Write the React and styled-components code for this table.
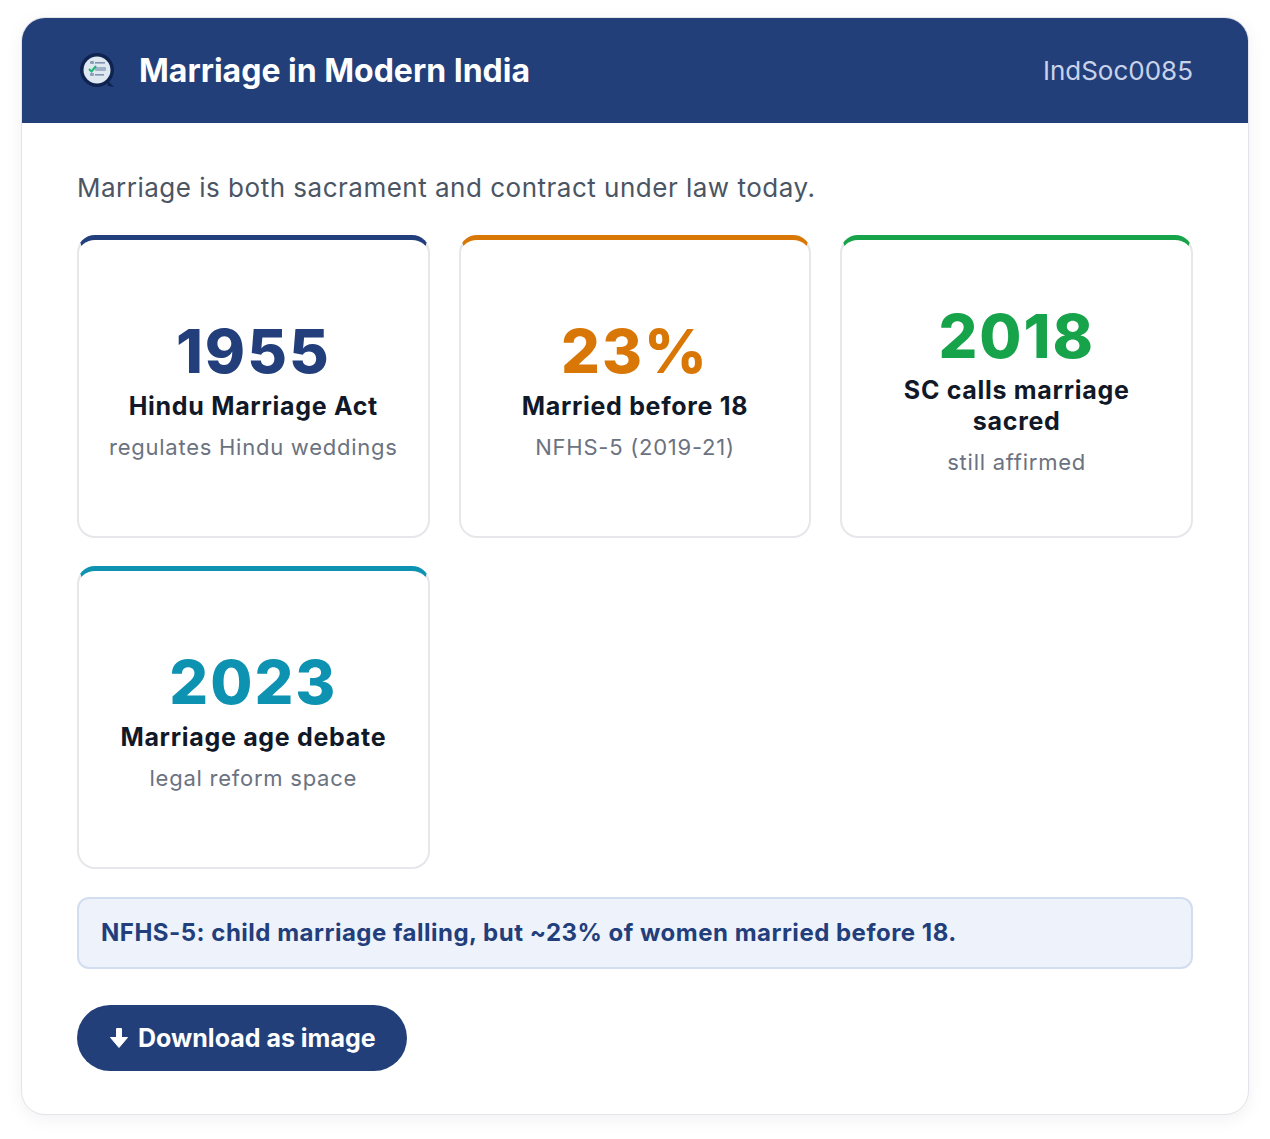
import styled, { createGlobalStyle } from 'styled-components'

const GlobalStyle = createGlobalStyle`
  html, body {
    margin: 0;
    padding: 0;
    background: #ffffff;
  }
  body {
    font-family: Inter, "Noto Sans", "Liberation Sans", sans-serif;
  }
`

const stats = [
  { num: '1955', color: '#233f7b', label: 'Hindu Marriage Act', sub: 'regulates Hindu weddings' },
  { num: '23%', color: '#d97706', label: 'Married before 18', sub: 'NFHS-5 (2019-21)' },
  { num: '2018', color: '#16a34a', label: 'SC calls marriage sacred', sub: 'still affirmed' },
  { num: '2023', color: '#0e92b1', label: 'Marriage age debate', sub: 'legal reform space' },
]

const Logo = () => (
  <svg width='40' height='40' viewBox='0 0 40 40'>
    <circle cx='19' cy='19' r='17' fill='#0f2350' />
    <path d='M29 29 L36 36 L30 35 Z' fill='#0f2350' />
    <circle cx='19' cy='19' r='13.5' fill='#dfe7f1' />
    <rect x='12' y='10' width='4' height='3' rx='1' fill='#8aa0bd' />
    <rect x='17' y='11' width='10' height='1.6' fill='#7f93b0' />
    <rect x='17' y='16' width='11' height='4' rx='1' fill='#9fb1c9' />
    <rect x='12' y='22' width='4' height='3' rx='1' fill='#8aa0bd' />
    <rect x='17' y='23' width='9' height='1.6' fill='#7f93b0' />
    <path d='M11 18 L13.5 20.5 L18 15' stroke='#22b573' strokeWidth='2' fill='none' />
  </svg>
)

const DownArrow = () => (
  <svg width='18' height='20' viewBox='0 0 18 20'>
    <rect x='6' y='0' width='6' height='11' rx='1' fill='#fff' />
    <path d='M0.5 9.5 L17.5 9.5 L9 19.5 Z' fill='#fff' strokeLinejoin='round' stroke='#fff' strokeWidth='1' />
  </svg>
)

const App = () => {
  return (
    <Page>
      <GlobalStyle />
      <Card>
        <Header>
          <Brand>
            <Logo />
            <Title>Marriage in Modern India</Title>
          </Brand>
          <Code>IndSoc0085</Code>
        </Header>

        <Body>
          <Lead>Marriage is both sacrament and contract under law today.</Lead>

          <Grid>
            {stats.map((s) => (
              <Stat key={s.num} accent={s.color}>
                <Num color={s.color}>{s.num}</Num>
                <Label>{s.label}</Label>
                <Sub>{s.sub}</Sub>
              </Stat>
            ))}
          </Grid>

          <Note>NFHS-5: child marriage falling, but ~23% of women married before 18.</Note>

          <DownloadBtn>
            <DownArrow />
            Download as image
          </DownloadBtn>
        </Body>
      </Card>
    </Page>
  )
}

export default App

const Page = styled.div`
  padding: 17px 21px 24px;
`

const Card = styled.div`
  background: #fff;
  border: 1px solid #e2e4ea;
  border-radius: 24px;
  overflow: hidden;
  box-shadow: 0 4px 18px rgba(15, 23, 42, 0.06);
`

const Header = styled.div`
  display: flex;
  align-items: center;
  justify-content: space-between;
  height: 105px;
  padding: 0 55px 0 56px;
  background: #233f7a;
`

const Brand = styled.div`
  display: flex;
  align-items: center;
  gap: 21px;
`

const Title = styled.h1`
  margin: 0;
  color: #fff;
  font-size: 32px;
  font-weight: 700;
`

const Code = styled.div`
  color: #c8d3ea;
  font-size: 26px;
  font-weight: 400;
`

const Body = styled.div`
  display: flex;
  flex-direction: column;
  align-items: flex-start;
  padding: 45px 55px 43px;
`

const Lead = styled.p`
  margin: 0 0 28px;
  color: #4b5563;
  font-size: 26px;
  line-height: 39px;
  letter-spacing: 0.5px;
`

const Grid = styled.div`
  align-self: stretch;
  display: grid;
  grid-template-columns: repeat(3, 1fr);
  gap: 28px 29px;
`

const Stat = styled.div`
  box-sizing: border-box;
  height: 303px;
  display: flex;
  flex-direction: column;
  align-items: center;
  justify-content: center;
  padding: 4px 24px 0;
  text-align: center;
  border: 2px solid #e5e7eb;
  border-top: 5px solid ${(p) => p.accent};
  border-radius: 18px;
`

const Num = styled.div`
  color: ${(p) => p.color};
  font-size: 61px;
  font-weight: 800;
  line-height: 1.1;
  letter-spacing: 2px;
`

const Label = styled.div`
  color: #111827;
  font-size: 25px;
  font-weight: 700;
  line-height: 31px;
  letter-spacing: 0.7px;
  margin-top: 5px;
`

const Sub = styled.div`
  color: #6b7280;
  font-size: 22px;
  line-height: 30px;
  letter-spacing: 0.75px;
  margin-top: 10px;
`

const Note = styled.div`
  box-sizing: border-box;
  align-self: stretch;
  margin-top: 28px;
  padding: 21px 22px;
  background: #edf2fb;
  border: 2px solid #d3ddf0;
  border-radius: 12px;
  color: #223e7b;
  font-size: 24px;
  font-weight: 700;
  line-height: 26px;
  letter-spacing: 0.5px;
`

const DownloadBtn = styled.button`
  display: flex;
  align-items: center;
  gap: 10px;
  margin-top: 36px;
  height: 66px;
  padding: 0 31px 0 33px;
  border: none;
  border-radius: 33px;
  background: #233f7a;
  color: #fff;
  font-family: inherit;
  font-size: 25px;
  font-weight: 700;
  cursor: pointer;
`
